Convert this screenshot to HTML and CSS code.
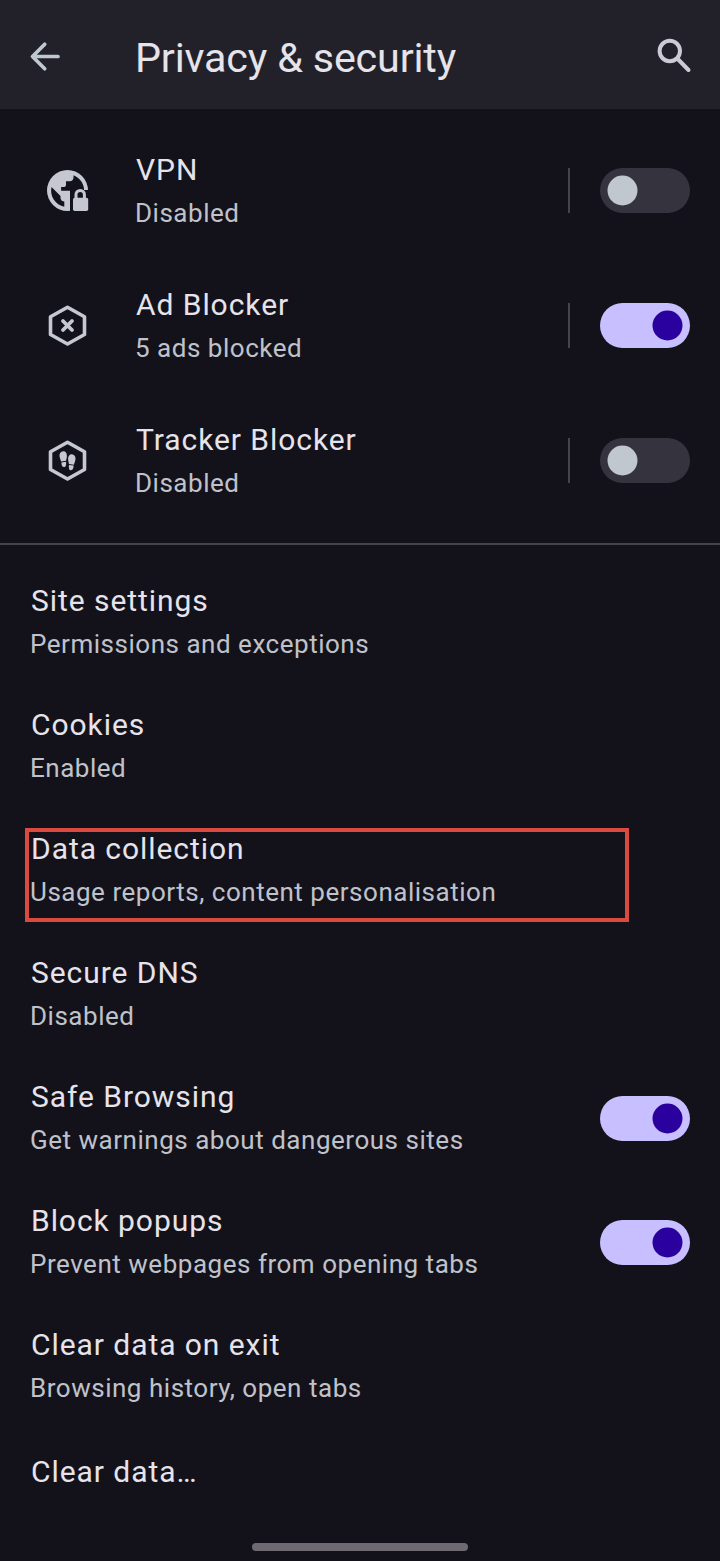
FILE: index.html
```html
<!DOCTYPE html>
<html lang="en">
<head>
<meta charset="utf-8">
<title>Privacy &amp; security</title>
<link rel="stylesheet" href="styles.css">
</head>
<body>
<header class="topbar">
  <svg class="back" viewBox="0 0 45 45"><path d="M22.7 10.3 10.500 22.500l12.200 12.200M11.200 22.500h24.800" fill="none" stroke="currentColor" stroke-width="3.700" stroke-linecap="round" stroke-linejoin="round"/></svg>
  <h1 class="heading">Privacy &amp; security</h1>
  <svg class="search" viewBox="0 0 45 45"><circle cx="18.800" cy="17" r="10.200" fill="none" stroke="currentColor" stroke-width="4"/><path d="m26.300 24.500 11.200 11.500" stroke="currentColor" stroke-width="4" stroke-linecap="round"/></svg>
</header>
<main>
  <section class="protections">
    <div class="row tall">
      <svg class="icon" viewBox="0 0 45 45"><defs><clipPath id="globe"><path d="M0 0h43.200v22H25V45H0z"/></clipPath></defs><g clip-path="url(#globe)"><circle cx="22.500" cy="22.500" r="20.500" fill="currentColor"/><path d="M28.500 7.200v2.300c0 2-1.600 3.800-3.800 3.800H21v3.800c0 1-.8 1.800-1.800 1.800h-3.100v3.800H25V24H39A16.500 16.500 0 0 0 28.500 7.200zM6.500 19l9 9v1.800c0 2 1.700 3.800 3.800 3.800v5.200A16.500 16.500 0 0 1 6.500 19z" fill="#13121b"/></g><path d="M31 30v-3.400a4.200 4.200 0 0 1 8.400 0V30" fill="none" stroke="currentColor" stroke-width="3"/><rect x="28" y="29.700" width="15.200" height="13.300" rx="1.800" fill="currentColor"/></svg>
      <div class="copy"><div class="name">VPN</div><div class="note">Disabled</div></div>
      <i class="rule"></i><span class="switch"></span>
    </div>
    <div class="row tall">
      <svg class="icon" viewBox="0 0 45 45"><path d="m22.500 4.300 17 9.500v17.700l-17 9.500-17-9.500V13.800z" fill="none" stroke="currentColor" stroke-width="3.600" stroke-linejoin="round"/><path d="m18 18 9 9m0-9-9 9" stroke="currentColor" stroke-width="3.800" stroke-linecap="round"/></svg>
      <div class="copy"><div class="name">Ad Blocker</div><div class="note">5 ads blocked</div></div>
      <i class="rule"></i><span class="switch on"></span>
    </div>
    <div class="row tall">
      <svg class="icon" viewBox="0 0 45 45"><path d="m22.500 4.300 17 9.500v17.700l-17 9.500-17-9.500V13.800z" fill="none" stroke="currentColor" stroke-width="3.600" stroke-linejoin="round"/><g fill="currentColor"><path d="M18.300 13.200c-2.700 0-3.900 2.200-3.800 4.600.1 2.200 1.200 4 1.600 5.800l5-.8c0-1.300.8-2.700.8-4.900 0-2.600-1.200-4.700-3.600-4.700zM16.400 24.500l4.600-.7c.4 2.900 0 5.300-2 5.300s-2.600-2-2.600-4.600zM26.700 16.300c2.700 0 3.900 2.200 3.800 4.600-.1 2.200-1.200 4-1.600 5.800l-5-.8c0-1.300-.8-2.700-.8-4.900 0-2.600 1.200-4.700 3.600-4.700zM28.600 27.600l-4.600-.7c-.4 2.900 0 5.300 2 5.300s2.600-2 2.600-4.600z"/></g></svg>
      <div class="copy"><div class="name">Tracker Blocker</div><div class="note">Disabled</div></div>
      <i class="rule"></i><span class="switch"></span>
    </div>
  </section>
  <section class="settings">
    <div class="row"><div class="copy"><div class="name">Site settings</div><div class="note">Permissions and exceptions</div></div></div>
    <div class="row"><div class="copy"><div class="name">Cookies</div><div class="note">Enabled</div></div></div>
    <div class="row marked"><div class="copy"><div class="name">Data collection</div><div class="note">Usage reports, content personalisation</div></div></div>
    <div class="row"><div class="copy"><div class="name">Secure DNS</div><div class="note">Disabled</div></div></div>
    <div class="row"><div class="copy"><div class="name">Safe Browsing</div><div class="note">Get warnings about dangerous sites</div></div><span class="switch on"></span></div>
    <div class="row"><div class="copy"><div class="name">Block popups</div><div class="note">Prevent webpages from opening tabs</div></div><span class="switch on"></span></div>
    <div class="row"><div class="copy"><div class="name">Clear data on exit</div><div class="note">Browsing history, open tabs</div></div></div>
    <div class="row single"><div class="name">Clear data…</div></div>
  </section>
</main>
<footer class="gesture"></footer>
</body>
</html>
```

FILE: styles.css
```css
*, *::before, *::after { box-sizing: border-box; }
body {
  margin: 0;
  height: 1561px;
  display: flex;
  flex-direction: column;
  background: #13121b;
  color: #e6e3eb;
  font-family: Roboto, "Noto Sans", sans-serif;
  overflow: hidden;
}
.topbar {
  height: 109px;
  flex: none;
  display: flex;
  align-items: center;
  padding: 4px 24px 0 22px;
  background: #22212a;
}
.back, .search, .icon { width: 45px; height: 45px; flex: none; color: #c6c8d1; }
.back { color: #c1c7d0; }
.search { color: #cccad5; }
.heading {
  flex: 1;
  margin: 0 0 0 68px;
  padding-top: 2px;
  font-size: 41.25px;
  font-weight: 400;
  line-height: 52px;
  letter-spacing: -.16px;
  white-space: nowrap;
}
.protections {
  height: 436px;
  padding-top: 14px;
  border-bottom: 2px solid #45444d;
}
.row {
  height: 124px;
  display: flex;
  align-items: center;
  padding: 0 30px;
}
.tall { height: 135px; }
.icon { margin: 0 45px 0 15px; }
.copy { flex: 1; padding-bottom: 3px; }
.name {
  height: 45px;
  padding-left: 1px;
  font-size: 30px;
  line-height: 45px;
  letter-spacing: .94px;
  white-space: nowrap;
}
.note {
  height: 38px;
  margin-top: 2px;
  color: #c0c2ca;
  font-size: 26px;
  line-height: 38px;
  letter-spacing: .52px;
  white-space: nowrap;
}
.rule { width: 2px; height: 45px; margin-right: 30px; background: #45444d; }
.switch {
  width: 90px;
  height: 45px;
  padding: 7px 7.5px;
  display: flex;
  border-radius: 23px;
  background: #35333d;
}
.switch::before {
  content: "";
  width: 30px;
  height: 30px;
  border-radius: 50%;
  background: #c0c7cf;
  transform: translate(-.5px, .5px);
}
.on { justify-content: flex-end; background: #c7bfff; }
.on::before { background: #2a009f; }
.settings { padding-top: 15px; }
.marked { position: relative; }
.marked::after {
  content: "";
  position: absolute;
  left: 25px;
  top: 20px;
  width: 604px;
  height: 94px;
  border: 4px solid #d94a40;
}
.single { height: 88px; padding-bottom: 1px; }
.gesture {
  flex: none;
  width: 216px;
  height: 8px;
  margin: auto auto 10px;
  border-radius: 4px;
  background: #6d6a72;
}
```
